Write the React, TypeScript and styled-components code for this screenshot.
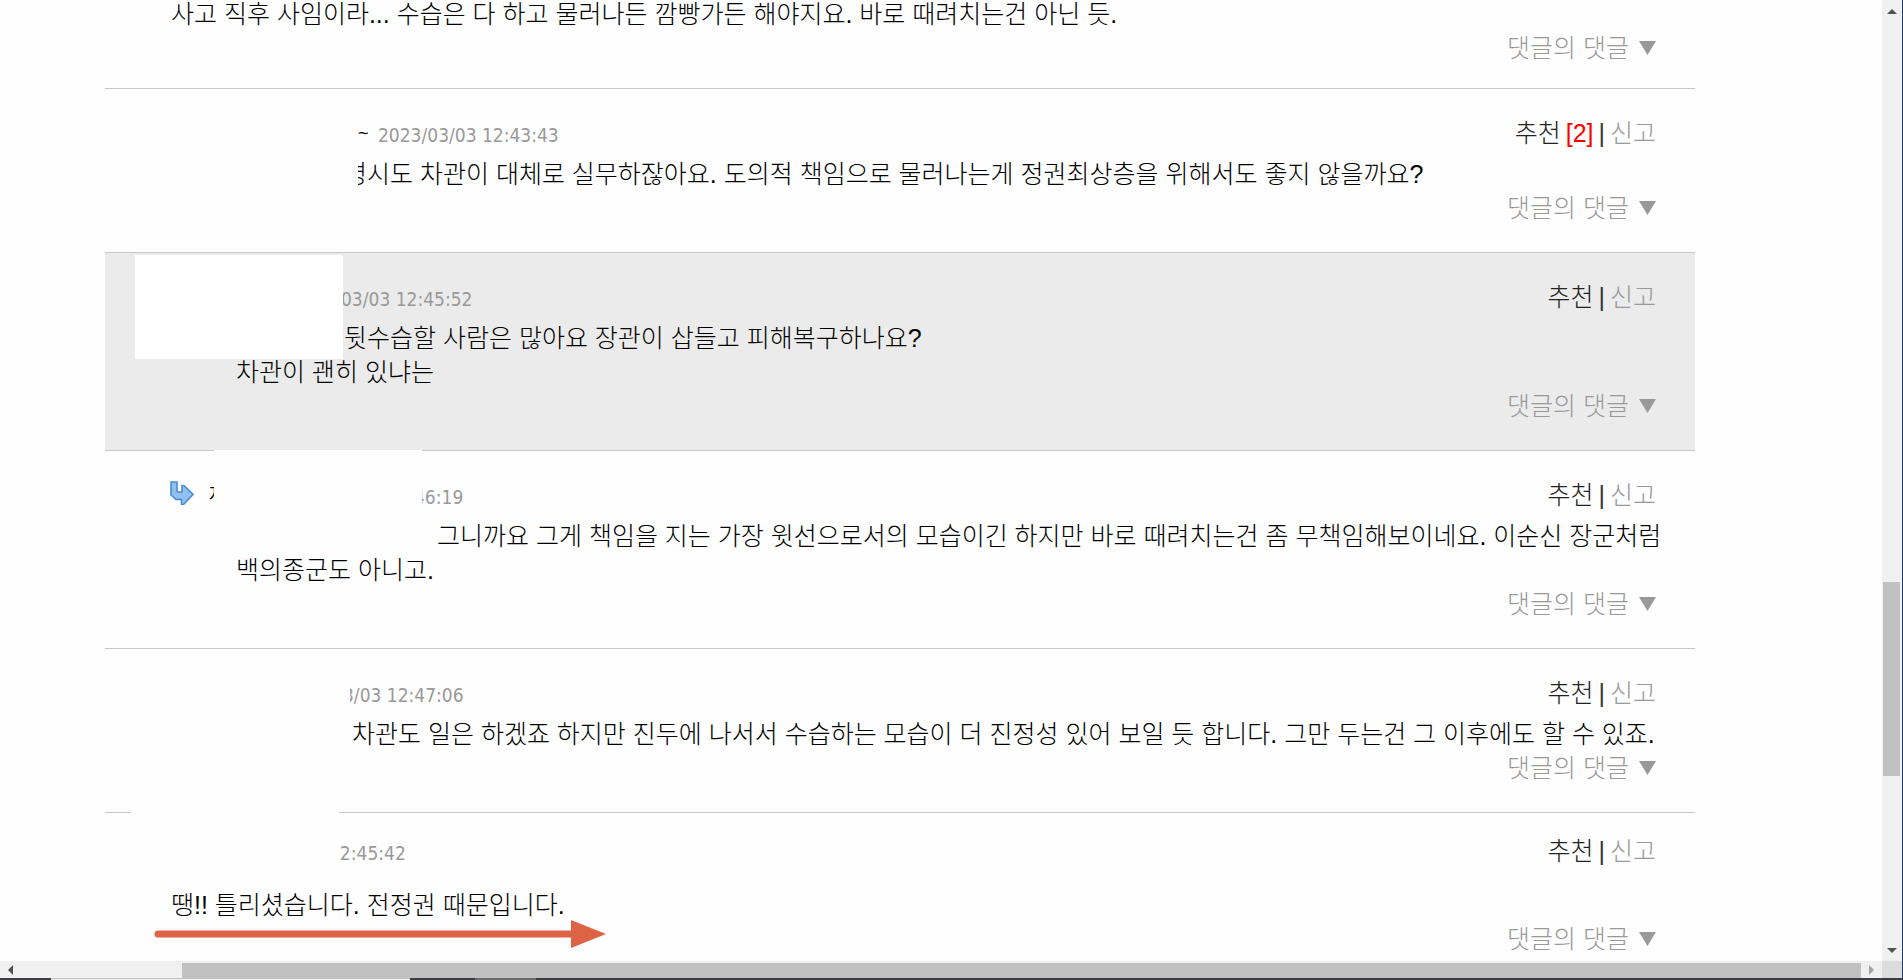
import React from "react";
import styled, { createGlobalStyle, css } from "styled-components";

const GlobalStyle = createGlobalStyle`
  *, *::before, *::after { box-sizing: border-box; }
  body {
    margin: 0;
    background: #fefefe;
    overflow: hidden;
  }
`;

const textFont = css`
  font-family: "Liberation Sans", "Noto Sans CJK KR", sans-serif;
  font-size: 25px;
  font-weight: 200;
  line-height: 34px;
`;

const Screen = styled.div`
  display: flex;
  flex-direction: column;
  height: 100vh;
  overflow: hidden;
`;

const Main = styled.div`
  display: flex;
  flex: 1;
  min-height: 0;
`;

const Viewport = styled.main`
  flex: 1;
  min-width: 0;
  overflow: hidden;
  background: #fefefe;
`;

const CommentList = styled.ol`
  list-style: none;
  margin: -3px 187px 0 105px;
  padding: 0;
`;

type Variant = "tail" | "reply" | "root";

const rowPadding: Record<Variant, string> = {
  tail: "0 39px 23px 66px",
  reply: "27px 39px 27px 66px",
  root: "21px 39px 21px 66px",
};

const Row = styled.li<{ $variant: Variant; $shaded?: boolean }>`
  position: relative;
  display: flex;
  flex-direction: column;
  padding: ${(p) => rowPadding[p.$variant]};
  background: ${(p) => (p.$shaded ? "#ebebeb" : "transparent")};
  & + & {
    border-top: 1px solid #c8c8c8;
  }
`;

const Head = styled.header<{ $variant: Variant }>`
  display: flex;
  align-items: center;
  height: 34px;
  margin-bottom: ${(p) => (p.$variant === "root" ? 20 : 7)}px;
`;

const Stamp = styled.div<{ $indent: number }>`
  display: flex;
  align-items: center;
  flex: 1;
  padding-left: ${(p) => p.$indent}px;
`;

const Nick = styled.span`
  ${textFont}
  font-size: 18px;
  font-weight: 400;
  width: 20px;
  color: #000;
`;

const Time = styled.time`
  font-family: "DejaVu Sans Condensed", "DejaVu Sans", sans-serif;
  font-stretch: condensed;
  font-size: 19px;
  line-height: 24px;
  padding-top: 3px;
  color: #999;
`;

const Actions = styled.div`
  ${textFont}
  display: flex;
  gap: 5px;
  color: #333;
`;

const TextButton = styled.button<{ $muted?: boolean }>`
  ${textFont}
  padding: 0;
  border: 0;
  background: none;
  cursor: pointer;
  color: ${(p) => (p.$muted ? "#999" : "#222")};
`;

const Count = styled.span`
  color: #f00;
  margin-left: 5px;
`;

const Text = styled.p<{ $nested: boolean; $indent: number }>`
  ${textFont}
  margin: 0 -39px 0 0;
  padding-left: ${(p) => (p.$nested ? 65 : 0)}px;
  text-indent: ${(p) => p.$indent}px;
  color: #000;
`;

const Footer = styled.footer`
  display: flex;
  justify-content: flex-end;
`;

const ToggleButton = styled(TextButton)`
  display: flex;
  align-items: center;
  gap: 10px;
`;

const ReplyIcon = styled.svg`
  position: absolute;
  left: 65px;
  top: 30px;
`;

const Mask = styled.span<{ $left: number; $top: number; $white?: boolean }>`
  position: absolute;
  left: ${(p) => p.$left}px;
  top: ${(p) => p.$top}px;
  width: 208px;
  height: 104px;
  background: ${(p) => (p.$white ? "#fff" : "#fefefe")};
`;

const Pointer = styled.svg`
  position: absolute;
  left: 49px;
  top: 107px;
`;

const VerticalBar = styled.div`
  display: flex;
  flex-direction: column;
  align-items: center;
  width: 21px;
  padding: 9px 1px 8px 0;
  background: #f0f0f0;
  border-right: 1px solid #1f3864;
`;

const VerticalTrack = styled.div`
  display: flex;
  flex-direction: column;
  flex: 1;
  width: 17px;
`;

const Space = styled.div<{ $grow: number }>`
  flex: ${(p) => p.$grow} 1 0;
`;

const Thumb = styled.div<{ $grow: number }>`
  flex: ${(p) => p.$grow} 1 0;
  background: #c1c1c1;
`;

const HorizontalBar = styled.div`
  display: flex;
  height: 17px;
  background: #f0f0f0;
`;

const HorizontalTrack = styled.div`
  display: flex;
  flex: 1;
  align-items: stretch;
  padding-top: 2px;
`;

const BarEnd = styled.div`
  display: flex;
  align-items: center;
  justify-content: center;
  width: 21px;
`;

const Corner = styled.div`
  width: 21px;
  background: #dcdcdc;
  border-right: 1px solid #1f3864;
`;

const Taskbar = styled.div`
  display: flex;
  height: 2px;
  background: #3c3c3e;
`;

const TaskSlot = styled.div<{ $width: number; $color?: string }>`
  width: ${(p) => p.$width}px;
  background: ${(p) => p.$color ?? "transparent"};
`;

const TaskWindow = styled(TaskSlot)`
  border-top: 1px solid #c1c1c1;
`;

interface Comment {
  variant: Variant;
  shaded?: boolean;
  nick?: string;
  time?: string;
  stampIndent?: number;
  votes?: number;
  lines: string[];
  indent?: number;
  mask?: { left: number; top: number; white?: boolean };
  arrow?: boolean;
  pointer?: boolean;
}

const comments: Comment[] = [
  {
    variant: "tail",
    lines: ["사고 직후 사임이라... 수습은 다 하고 물러나든 깜빵가든 해야지요. 바로 때려치는건 아닌 듯."],
  },
  {
    variant: "reply",
    nick: "~",
    time: "2023/03/03 12:43:43",
    stampIndent: 187,
    votes: 2,
    lines: ["령시도 차관이 대체로 실무하잖아요. 도의적 책임으로 물러나는게 정권최상층을 위해서도 좋지 않을까요?"],
    indent: 108,
    mask: { left: 45, top: 20 },
  },
  {
    variant: "reply",
    shaded: true,
    time: "03/03 12:45:52",
    stampIndent: 170,
    lines: ["뒷수습할 사람은 많아요 장관이 삽들고 피해복구하나요?", "차관이 괜히 있냐는"],
    indent: 108,
    mask: { left: 30, top: 2, white: true },
  },
  {
    variant: "reply",
    arrow: true,
    nick: "자",
    time: "46:19",
    stampIndent: 38,
    lines: [
      "그니까요 그게 책임을 지는 가장 윗선으로서의 모습이긴 하지만 바로 때려치는건 좀 무책임해보이네요. 이순신 장군처럼",
      "백의종군도 아니고.",
    ],
    indent: 201,
    mask: { left: 109, top: -1 },
  },
  {
    variant: "reply",
    time: "3/03 12:47:06",
    stampIndent: 172,
    lines: ["차관도 일은 하겠죠 하지만 진두에 나서서 수습하는 모습이 더 진정성 있어 보일 듯 합니다. 그만 두는건 그 이후에도 할 수 있죠."],
    indent: 116,
    mask: { left: 37, top: 10 },
  },
  {
    variant: "root",
    time: "12:45:42",
    stampIndent: 158,
    lines: ["땡!! 틀리셨습니다. 전정권 때문입니다."],
    mask: { left: 26, top: -40 },
    pointer: true,
  },
];

const NickGap = styled.span`
  width: 185px;
`;

function CommentRow({ comment: c }: { comment: Comment }) {
  return (
    <Row $variant={c.variant} $shaded={c.shaded}>
      {c.time && (
        <Head $variant={c.variant}>
          <Stamp $indent={c.stampIndent ?? 0}>
            {c.nick && <Nick>{c.nick}</Nick>}
            {c.arrow && <NickGap />}
            <Time>{c.time}</Time>
          </Stamp>
          <Actions>
            <TextButton type="button">
              추천
              {c.votes && <Count>[{c.votes}]</Count>}
            </TextButton>
            <span>|</span>
            <TextButton type="button" $muted>
              신고
            </TextButton>
          </Actions>
        </Head>
      )}
      <Text $nested={c.variant === "reply"} $indent={c.indent ?? 0}>
        {c.lines.map((line, i) => (
          <React.Fragment key={line}>
            {i > 0 && <br />}
            {line}
          </React.Fragment>
        ))}
      </Text>
      <Footer>
        <ToggleButton type="button" $muted>
          댓글의 댓글
          <svg width="17" height="14" viewBox="0 0 17 14" aria-hidden="true">
            <path d="M0 0H17L8.500 14Z" fill="#999" />
          </svg>
        </ToggleButton>
      </Footer>
      {c.mask && <Mask $left={c.mask.left} $top={c.mask.top} $white={c.mask.white} />}
      {c.arrow && (
        <ReplyIcon width="24" height="24" viewBox="0 0 24 24" aria-hidden="true">
          <path
            d="M1 1H7V10Q7 11 8 11H12V4.500H14L23 13.500L13.500 23.500H11.500V18.500H6L1 14Z"
            fill="#8fc0ee"
            stroke="#4a8bd0"
            strokeWidth="1.600"
          />
        </ReplyIcon>
      )}
      {c.pointer && (
        <Pointer width="452" height="28" viewBox="0 0 452 28" aria-hidden="true">
          <path d="M4 14H420" stroke="#dc6344" strokeWidth="7" strokeLinecap="round" />
          <path d="M417 0L452 14L417 28Z" fill="#dc6344" />
        </Pointer>
      )}
    </Row>
  );
}

export default function App() {
  return (
    <Screen>
      <GlobalStyle />
      <Main>
        <Viewport>
          <CommentList>
            {comments.map((c) => (
              <CommentRow key={c.lines[0]} comment={c} />
            ))}
          </CommentList>
        </Viewport>
        <VerticalBar aria-hidden="true">
          <svg width="10" height="5" viewBox="0 0 10 5">
            <path d="M0 5L5 0L10 5Z" fill="#505050" />
          </svg>
          <VerticalTrack>
            <Space $grow={567} />
            <Thumb $grow={194} />
            <Space $grow={172} />
          </VerticalTrack>
          <svg width="10" height="5" viewBox="0 0 10 5">
            <path d="M0 0L5 5L10 0Z" fill="#505050" />
          </svg>
        </VerticalBar>
      </Main>
      <HorizontalBar aria-hidden="true">
        <BarEnd>
          <svg width="5" height="10" viewBox="0 0 5 10">
            <path d="M5 0L0 5L5 10Z" fill="#505050" />
          </svg>
        </BarEnd>
        <HorizontalTrack>
          <Space $grow={161} />
          <Thumb $grow={1679} />
        </HorizontalTrack>
        <BarEnd>
          <svg width="5" height="10" viewBox="0 0 5 10">
            <path d="M0 0L5 5L0 10Z" fill="#a3a3a3" />
          </svg>
        </BarEnd>
        <Corner />
      </HorizontalBar>
      <Taskbar aria-hidden="true">
        <TaskSlot $width={51} />
        <TaskWindow $width={359} $color="#f0f0f0" />
        <TaskSlot $width={65} />
        <TaskSlot $width={61} $color="#6a6a6a" />
      </Taskbar>
    </Screen>
  );
}
